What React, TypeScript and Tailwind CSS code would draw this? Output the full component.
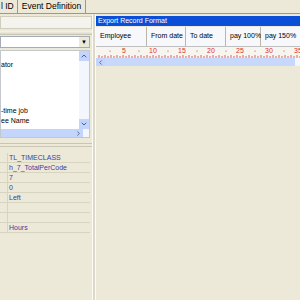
import { ChevronDown, ChevronUp, ChevronLeft, ChevronRight } from 'lucide-react';

const font = { fontFamily: '"Liberation Sans", Arial, sans-serif' };

const props = ['TL_TIMECLASS', 'h_7_TotalPerCode', '7', '0', 'Left', '', '', 'Hours'];
const cols = [
  { label: 'Employee', w: 'w-[51px]' },
  { label: 'From date', w: 'w-[39px]' },
  { label: 'To date', w: 'w-[40px]' },
  { label: 'pay 100%', w: 'w-[35px]' },
  { label: 'pay 150%', w: 'w-[40px]' },
];
const marks = [5, 10, 15, 20, 25, 30, 35];

function Ruler() {
  return (
    <svg width="205" height="11" className="block bg-[#f6f5ef]">
      {Array.from({ length: 70 }).map((_, i) => (
        <line key={i} x1={3 + i * 3} y1={i % 2 ? 9 : 8} x2={3 + i * 3} y2={11} stroke="#e86060" strokeWidth="1" />
      ))}
      {marks.map((m, i) => (
        <text key={m} x={28 + i * 29} y={6} fontSize="7" fill="#e03030" textAnchor="middle" fontFamily="Liberation Sans, sans-serif">
          {m}
        </text>
      ))}
      {marks.map((m, i) => (
        <circle key={'d' + m} cx={14 + i * 29} cy={4} r={0.6} fill="#e03030" />
      ))}
    </svg>
  );
}

export default function App() {
  return (
    <div className="w-[300px] h-[300px] overflow-hidden bg-[#ece9d8] text-[7px] text-black flex flex-col" style={font}>
      {/* tabs */}
      <div className="h-[14px] flex items-end border-b border-[#919b9c] shrink-0">
        <div className="h-[13px] pl-[1px] pr-[3px] flex items-center border-r border-[#919b9c] text-[8.5px]">l ID</div>
        <div className="h-[13px] px-[4px] flex items-center border-r border-[#919b9c] text-[8.5px]">Event Definition</div>
      </div>

      <div className="flex flex-1 min-h-0">
        {/* left pane */}
        <div className="w-[92px] flex flex-col shrink-0">
          <div className="h-[13px] mt-[2px] bg-[#f4f3ee] border border-[#d0cdbd]" />
          <div className="h-[4px] mt-[2px] bg-gradient-to-b from-[#f6f5ef] to-[#dcd8c6] border-b border-[#c9c5b2]" />
          <div className="h-[12px] mt-[1px] mr-[2px] bg-white border border-[#a5acb5] flex justify-end">
            <div className="w-[10px] bg-[#ece9d8] flex items-center justify-center">
              <span className="text-[6px] leading-none">▼</span>
            </div>
          </div>
          <div className="h-[88px] mt-[2px] mr-[2px] bg-white border border-[#c4c8cc] flex flex-col">
            <div className="flex flex-1 min-h-0">
              <div className="flex-1 relative overflow-hidden text-[7px] leading-[10px]">
                <div className="absolute left-0 top-[9px]">ator</div>
                <div className="absolute left-0 top-[55px]">-time job</div>
                <div className="absolute left-0 top-[65px]">ee Name</div>
              </div>
              <div className="w-[10px] bg-[#f3f6fd] flex flex-col justify-between">
                <div className="h-[10px] bg-[#c3d5fd] flex items-center justify-center">
                  <ChevronUp size={8} strokeWidth={3} color="#4d6185" />
                </div>
                <div className="h-[10px] bg-[#c3d5fd] flex items-center justify-center">
                  <ChevronDown size={8} strokeWidth={3} color="#4d6185" />
                </div>
              </div>
            </div>
            <div className="h-[8px] flex">
              <div className="w-[73px] bg-[#c3d5fd]" />
              <div className="w-[9px] bg-[#c3d5fd] flex items-center justify-center">
                <ChevronRight size={7} strokeWidth={3} color="#4d6185" />
              </div>
              <div className="flex-1 bg-[#f3f6fd]" />
            </div>
          </div>
          <div className="h-[4px] mt-[5px] border-t border-b border-[#c9c5b2]" />
          <div className="mt-[6px] mr-[2px] flex flex-col text-[#3c3ca0]">
            {props.map((p, i) => (
              <div key={i} className="h-[10px] flex border-b border-[#d8d4c2]">
                <div className="w-[8px] border-r border-[#d8d4c2]" />
                <div className="pl-[1px] leading-[10px]">{p}</div>
              </div>
            ))}
          </div>
        </div>

        <div className="w-[4px] border-l border-[#a7a495] border-r border-[#fbfaf6] bg-[#dcd9c8]" />

        {/* right pane */}
        <div className="flex-1 flex flex-col min-w-0">
          <div className="h-[10px] mt-[2px] bg-[#0b4fd8] text-white text-[7px] leading-[10px] pl-[2px]">
            Export Record Format
          </div>
          <div className="h-[20px] mt-[1px] flex bg-white border-b border-[#c0c0c0]">
            {cols.map((c) => (
              <div key={c.label} className={`${c.w} shrink-0 border-r border-[#b9b6a8] flex items-center pl-[4px] bg-[#f7f8fc] whitespace-nowrap`}>
                {c.label}
              </div>
            ))}
          </div>
          <Ruler />
          <div className="h-[8px] flex">
            <div className="w-[9px] bg-[#c3d5fd] flex items-center justify-center">
              <ChevronLeft size={7} strokeWidth={3} color="#4d6185" />
            </div>
            <div className="w-[190px] bg-[#c8d8fb]" />
            <div className="flex-1 bg-[#f3f6fd]" />
          </div>
        </div>
      </div>
    </div>
  );
}
